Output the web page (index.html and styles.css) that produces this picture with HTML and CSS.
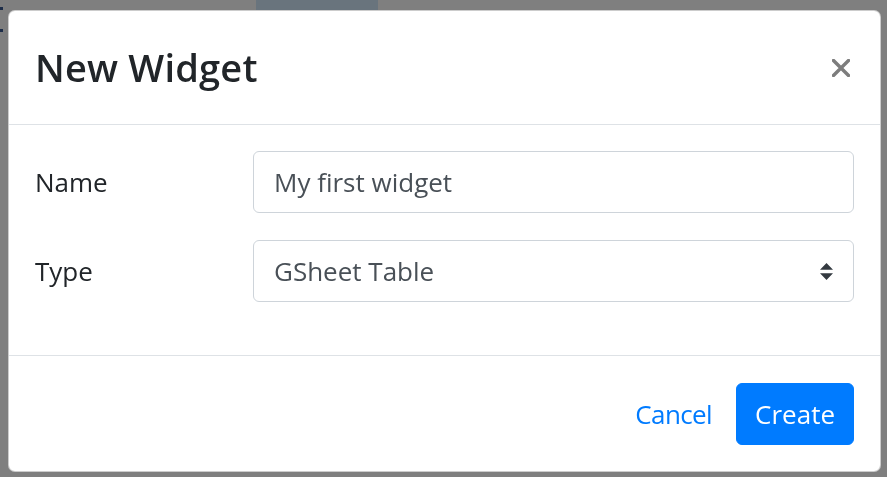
FILE: index.html
```html
<!DOCTYPE html>
<html lang="en">
<head>
<meta charset="utf-8">
<title>New Widget</title>
<link rel="stylesheet" href="styles.css">
</head>
<body>
<div class="page">
  <div class="marks"><span class="mark"></span><span class="mark"></span></div>
  <span class="tab"></span>
</div>
<div class="backdrop">
  <div class="modal" role="dialog">
    <div class="modal-header">
      <h4 class="modal-title">New Widget</h4>
      <button class="close" type="button" aria-label="Close">
        <svg width="18" height="18" viewBox="0 0 18 18"><path d="M1.5 1.5L16.5 16.5M16.5 1.5L1.5 16.5" stroke="#7d7d7d" stroke-width="3.4" stroke-linecap="square" fill="none"/></svg>
      </button>
    </div>
    <div class="modal-body">
      <div class="form-row">
        <label class="col-label">Name</label>
        <div class="control">My first widget</div>
      </div>
      <div class="form-row">
        <label class="col-label">Type</label>
        <div class="control select">
          <span>GSheet Table</span>
          <svg class="arrows" width="13" height="17" viewBox="0 0 4 5" preserveAspectRatio="none"><path fill="#343a40" d="M2 0L0 2h4zm0 5L0 3h4z"/></svg>
        </div>
      </div>
    </div>
    <div class="modal-footer">
      <button class="btn btn-link" type="button">Cancel</button>
      <button class="btn btn-primary" type="button">Create</button>
    </div>
  </div>
</div>
</body>
</html>
```
FILE: styles.css
```css
html, body {
  margin: 0;
  padding: 0;
  background: #ffffff;
  font-family: "Open Sans", "Noto Sans", sans-serif;
  color: #212529;
}

.page {
  display: flex;
  align-items: flex-start;
}

.marks {
  display: flex;
  flex-direction: column;
  gap: 19px;
  padding-top: 7px;
  width: 3px;
}

.mark {
  display: block;
  width: 3px;
  height: 3px;
  background: #3a5a92;
}

.tab {
  display: block;
  margin-left: 253px;
  width: 122px;
  height: 10px;
  background: #d3e9fb;
}

.backdrop {
  position: fixed;
  inset: 0;
  background: rgba(0, 0, 0, 0.5);
  padding: 10px 6px 0 8px;
}

.modal {
  width: 873px;
  box-sizing: border-box;
  background: #ffffff;
  border: 1px solid rgba(0, 0, 0, 0.2);
  border-radius: 7px;
  display: flex;
  flex-direction: column;
}

.modal-header {
  display: flex;
  align-items: center;
  justify-content: space-between;
  padding: 27px 26px;
  border-bottom: 1px solid #dee2e6;
}

.modal-title {
  margin: 0;
  font-size: 38px;
  line-height: 59px;
  font-weight: 600;
  color: #212529;
  letter-spacing: 0.2px;
}

.close {
  border: 0;
  background: transparent;
  padding: 0;
  margin: 0 4px 0 0;
  width: 18px;
  height: 18px;
  display: flex;
}

.modal-body {
  padding: 26px;
}

.form-row {
  display: grid;
  grid-template-columns: 218px 1fr;
  align-items: center;
  margin-bottom: 27px;
}

.col-label {
  font-size: 26px;
  line-height: 39px;
  color: #212529;
}

.control {
  height: 62px;
  box-sizing: border-box;
  border: 1px solid #ced4da;
  border-radius: 6px;
  padding: 11px 20px 10px;
  font-size: 26px;
  line-height: 39px;
  color: #495057;
  background: #ffffff;
}

.select {
  display: flex;
  align-items: center;
  justify-content: space-between;
}

.arrows {
  display: block;
}

.modal-footer {
  display: flex;
  justify-content: flex-end;
  align-items: center;
  gap: 3px;
  padding: 27px 26px 26px;
  border-top: 1px solid #dee2e6;
}

.btn {
  font-family: "Open Sans", "Noto Sans", sans-serif;
  font-size: 26px;
  line-height: 39px;
  height: 62px;
  box-sizing: border-box;
  padding: 10px 18px;
  border: 1px solid transparent;
  border-radius: 6px;
  background: transparent;
  cursor: pointer;
}

.btn-link {
  color: #007bff;
  padding: 10px 20px 10px 16px;
  letter-spacing: -0.6px;
}

.btn-primary {
  background: #007bff;
  border-color: #007bff;
  color: #ffffff;
}
```
